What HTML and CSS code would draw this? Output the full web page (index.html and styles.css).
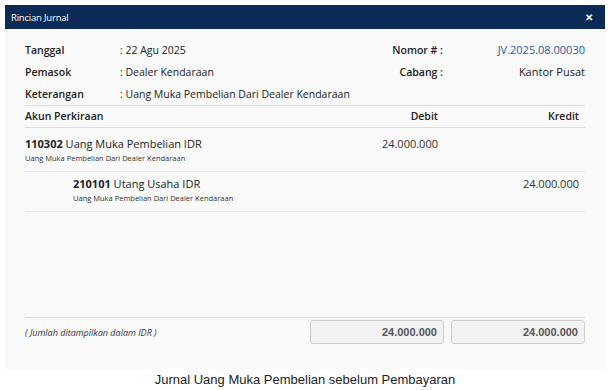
FILE: index.html
```html
<!DOCTYPE html>
<html>
<head>
<meta charset="utf-8">
<link rel="stylesheet" href="styles.css">
</head>
<body>
<div class="page">
  <div class="dialog">
    <div class="dlg-head">
      <span class="dlg-title">Rincian Jurnal</span>
      <span class="dlg-close">&#x2715;</span>
    </div>
    <div class="dlg-body">
      <div class="info">
        <div class="lbl">Tanggal</div>
        <div class="val">: 22 Agu 2025</div>
        <div class="lbl2">Nomor # :</div>
        <div class="val2 link">JV.2025.08.00030</div>
        <div class="lbl">Pemasok</div>
        <div class="val">: Dealer Kendaraan</div>
        <div class="lbl2">Cabang :</div>
        <div class="val2">Kantor Pusat</div>
        <div class="lbl">Keterangan</div>
        <div class="val span3">: Uang Muka Pembelian Dari Dealer Kendaraan</div>
      </div>
      <div class="table">
        <div class="trow thead">
          <div class="c-acc">Akun Perkiraan</div>
          <div class="c-num">Debit</div>
          <div class="c-num">Kredit</div>
        </div>
        <div class="trow tline first">
          <div class="c-acc">
            <div class="acc"><b>110302</b> Uang Muka Pembelian IDR</div>
            <div class="memo">Uang Muka Pembelian Dari Dealer Kendaraan</div>
          </div>
          <div class="c-num amt">24.000.000</div>
          <div class="c-num amt"></div>
        </div>
        <div class="trow tline second">
          <div class="c-acc indent">
            <div class="acc"><b>210101</b> Utang Usaha IDR</div>
            <div class="memo">Uang Muka Pembelian Dari Dealer Kendaraan</div>
          </div>
          <div class="c-num amt"></div>
          <div class="c-num amt">24.000.000</div>
        </div>
      </div>
      <div class="foot">
        <div class="note">( Jumlah ditampilkan dalam IDR )</div>
        <div class="total">24.000.000</div>
        <div class="total">24.000.000</div>
      </div>
    </div>
  </div>
  <div class="caption">Jurnal Uang Muka Pembelian sebelum Pembayaran</div>
</div>
</body>
</html>
```
FILE: styles.css
```css
* { box-sizing: border-box; }
html, body { margin: 0; padding: 0; background: #ffffff; }
body { font-family: "Open Sans", "Noto Sans", sans-serif; color: #222; }
.page { padding: 5px 9px 0 5px; }
.dialog { width: 600px; height: 364px; background: #f9f9f9; display: flex; flex-direction: column; }
.dlg-head { height: 24px; background: #0b2a56; color: #fff; display: flex; align-items: center; justify-content: space-between; padding: 0 12px 0 6px; }
.dlg-title { font-size: 9.5px; letter-spacing: -0.2px; }
.dlg-close { font-size: 10px; font-weight: 700; }
.dlg-body { flex: 1; display: flex; flex-direction: column; padding: 10px 20px 0 20px; }
.info { display: grid; grid-template-columns: 95px 1fr 150px 142px; font-size: 10.5px; border-bottom: 1px solid #dcdcdc; }
.info > div { height: 22px; line-height: 22px; white-space: nowrap; }
.lbl { font-weight: 600; color: #222; }
.val { color: #222; }
.span3 { grid-column: span 3; }
.lbl2 { font-weight: 600; text-align: right; }
.val2 { text-align: right; font-size: 11px; }
.link { color: #2b5aa3; }
.trow { display: flex; }
.c-acc { flex: 1; }
.c-num { width: 141px; text-align: right; padding-right: 6px; }
.thead { font-size: 10.5px; font-weight: 600; height: 22px; line-height: 21px; border-bottom: 1px solid #dcdcdc; }
.tline { border-bottom: 1px solid #e8e8e8; }
.first { height: 44px; padding-top: 7px; }
.second { height: 40px; padding-top: 3px; }
.indent { padding-left: 48px; }
.acc { font-size: 11px; line-height: 18px; color: #222; }
.acc b { font-weight: 700; }
.memo { font-size: 7.5px; line-height: 10px; color: #333; }
.amt { font-size: 11px; line-height: 18px; color: #333; }
.foot { margin-top: auto; margin-bottom: 25px; border-top: 1px solid #dcdcdc; display: flex; align-items: center; padding-top: 2px; }
.note { flex: 1; font-size: 9px; font-style: italic; color: #333; }
.total { width: 134px; height: 24px; border: 1px solid #cfcfcf; border-radius: 3px; background: #f2f2f2; margin-left: 7px; font-family: "Liberation Sans", Arial, sans-serif; font-weight: 700; font-size: 11px; color: #555; text-align: right; line-height: 22px; padding-right: 6px; }
.caption { font-family: "Liberation Sans", Arial, sans-serif; font-size: 13px; color: #222; text-align: center; padding-top: 3px; width: 600px; }
```
